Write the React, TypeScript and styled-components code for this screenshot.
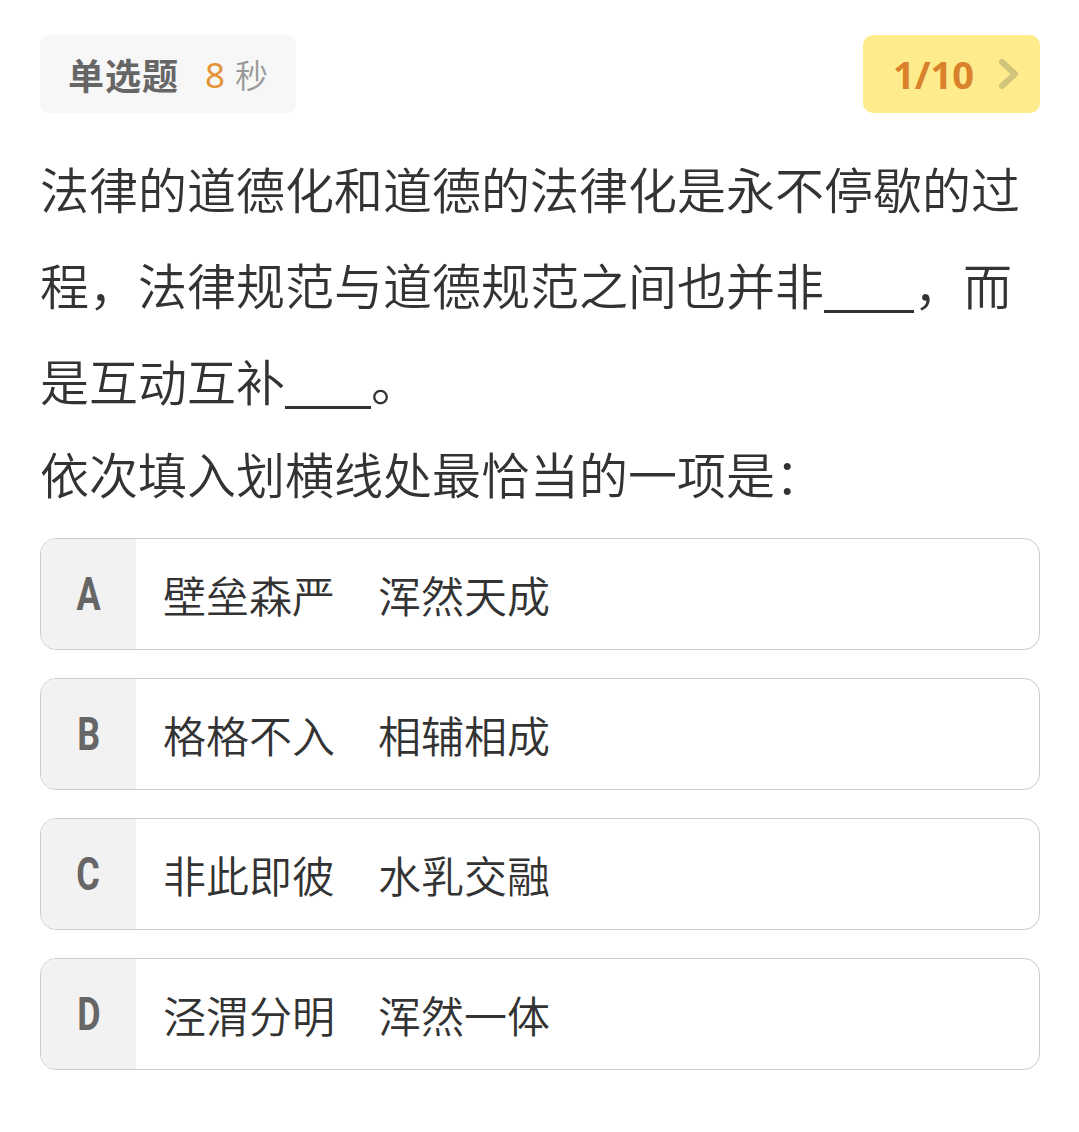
import React from "react";
import styled, { createGlobalStyle } from "styled-components";

const GlobalStyle = createGlobalStyle`
  html, body {
    margin: 0;
    padding: 0;
    background: #ffffff;
  }
  body {
    font-family: "Noto Sans CJK SC", "Noto Sans", sans-serif;
  }
`;

interface IOption {
  key: string;
  text: string;
}

const options: IOption[] = [
  { key: "A", text: "壁垒森严　浑然天成" },
  { key: "B", text: "格格不入　相辅相成" },
  { key: "C", text: "非此即彼　水乳交融" },
  { key: "D", text: "泾渭分明　浑然一体" },
];

export default function App() {
  return (
    <>
      <GlobalStyle />
      <Page>
        <TopBar>
          <TypeTag>
            <TypeLabel>单选题</TypeLabel>
            <Timer>
              <Seconds>8</Seconds>
              <Unit>秒</Unit>
            </Timer>
          </TypeTag>
          <ProgressBadge>
            <ProgressText>1/10</ProgressText>
            <svg width="26" height="34" viewBox="0 0 26 34" fill="none">
              <path
                d="M6 5 L19 17 L6 29"
                stroke="#cfc47a"
                strokeWidth="6"
                strokeLinecap="round"
                strokeLinejoin="round"
              />
            </svg>
          </ProgressBadge>
        </TopBar>

        <Question>
          法律的道德化和道德的法律化是永不停歇的过程，法律规范与道德规范之间也并非
          <Blank $width={90} />
          ，而是互动互补
          <Blank $width={86} />。
        </Question>
        <Prompt>依次填入划横线处最恰当的一项是：</Prompt>

        <OptionList>
          {options.map((option) => (
            <OptionCard key={option.key}>
              <OptionKey>
                <KeyLetter>{option.key}</KeyLetter>
              </OptionKey>
              <OptionText>{option.text}</OptionText>
            </OptionCard>
          ))}
        </OptionList>
      </Page>
    </>
  );
}

const Page = styled.div`
  padding: 35px 39px 40px 40px;
`;

const TopBar = styled.div`
  display: flex;
  justify-content: space-between;
  align-items: center;
`;

const TypeTag = styled.div`
  display: flex;
  align-items: center;
  height: 78px;
  padding: 0 28px 0 28px;
  border-radius: 10px;
  background: #f7f7f7;
`;

const TypeLabel = styled.span`
  font-size: 36px;
  font-weight: 700;
  color: #666666;
  letter-spacing: 1px;
`;

const Timer = styled.span`
  display: flex;
  align-items: center;
  margin-left: 26px;
  gap: 10px;
`;

const Seconds = styled.span`
  font-family: "Noto Sans", sans-serif;
  font-size: 35px;
  color: #e39438;
`;

const Unit = styled.span`
  font-size: 33px;
  font-weight: 350;
  color: #999999;
`;

const ProgressBadge = styled.div`
  display: flex;
  align-items: center;
  gap: 22px;
  height: 78px;
  padding: 0 18px 0 30px;
  border-radius: 10px;
  background: #fdeb8c;
`;

const ProgressText = styled.span`
  font-family: "Noto Sans", sans-serif;
  font-size: 38px;
  font-weight: 700;
  color: #d9812b;
`;

const Question = styled.div`
  margin-top: 27px;
  font-size: 49px;
  font-weight: 350;
  line-height: 96px;
  color: #333333;
  word-break: break-all;
`;

const Blank = styled.span<{ $width: number }>`
  display: inline-block;
  width: ${(p) => p.$width}px;
  height: 0;
  border-bottom: 3px solid #333333;
  vertical-align: -8px;
`;

const Prompt = styled.div`
  font-size: 49px;
  font-weight: 350;
  line-height: 90px;
  color: #333333;
`;

const OptionList = styled.div`
  display: flex;
  flex-direction: column;
  gap: 28px;
  margin-top: 20px;
`;

const OptionCard = styled.div`
  display: flex;
  align-items: stretch;
  height: 112px;
  border: 1px solid #cccccc;
  border-radius: 16px;
  overflow: hidden;
  box-sizing: border-box;
`;

const OptionKey = styled.div`
  display: flex;
  align-items: center;
  justify-content: center;
  width: 95px;
  flex-shrink: 0;
  background: #f2f2f2;
`;

const KeyLetter = styled.span`
  display: inline-block;
  font-family: Roboto, "Noto Sans", sans-serif;
  font-size: 46px;
  font-weight: 700;
  color: #666666;
  transform: scaleX(0.78);
`;

const OptionText = styled.div`
  display: flex;
  align-items: center;
  padding-left: 27px;
  font-size: 43px;
  font-weight: 350;
  color: #333333;
`;
